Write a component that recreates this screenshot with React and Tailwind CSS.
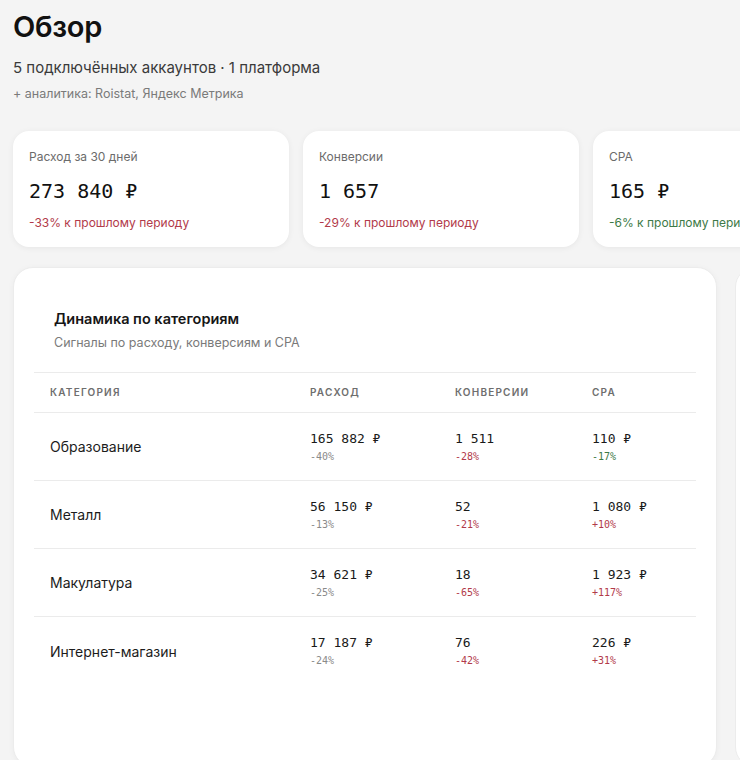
const cards = [
  { label: 'Расход за 30 дней', value: '273 840 ₽', delta: '-33% к прошлому периоду', tone: 'bad' },
  { label: 'Конверсии', value: '1 657', delta: '-29% к прошлому периоду', tone: 'bad' },
  { label: 'CPA', value: '165 ₽', delta: '-6% к прошлому периоду', tone: 'good' },
];

const rows = [
  { name: 'Образование', spend: '165 882 ₽', spendD: '-40%', conv: '1 511', convD: '-28%', cpa: '110 ₽', cpaD: '-17%', cpaTone: 'good' },
  { name: 'Металл', spend: '56 150 ₽', spendD: '-13%', conv: '52', convD: '-21%', cpa: '1 080 ₽', cpaD: '+10%', cpaTone: 'bad' },
  { name: 'Макулатура', spend: '34 621 ₽', spendD: '-25%', conv: '18', convD: '-65%', cpa: '1 923 ₽', cpaD: '+117%', cpaTone: 'bad' },
  { name: 'Интернет-магазин', spend: '17 187 ₽', spendD: '-24%', conv: '76', convD: '-42%', cpa: '226 ₽', cpaD: '+31%', cpaTone: 'bad' },
];

const toneClass = (tone) =>
  tone === 'good' ? 'text-[#3d7a47]' : tone === 'bad' ? 'text-[#b23a4a]' : 'text-[#8a8a8a]';

const StatCard = ({ label, value, delta, tone }) => (
  <div className="w-[276px] h-[116px] shrink-0 rounded-[16px] bg-white shadow-[0_1px_6px_rgba(0,0,0,0.06)] px-4 pt-[18px]">
    <div className="text-[12px] leading-4 text-[#6b6b6b]">{label}</div>
    <div className="mt-[14px] text-[20px] leading-6 text-[#111] font-['DejaVu_Sans_Mono',monospace]">{value}</div>
    <div className={`mt-[12px] text-[12px] leading-4 ${toneClass(tone)}`}>{delta}</div>
  </div>
);

const Cell = ({ value, delta, tone }) => (
  <div>
    <div className="text-[13px] leading-4 text-[#1a1a1a] font-['DejaVu_Sans_Mono',monospace]">{value}</div>
    <div className={`mt-[4px] text-[10px] leading-3 font-['DejaVu_Sans_Mono',monospace] ${toneClass(tone)}`}>{delta}</div>
  </div>
);

export default function App() {
  return (
    <div className="w-[740px] h-[760px] overflow-hidden bg-[#f4f4f4] font-['Inter','Noto_Sans',sans-serif] text-[#111]">
      <div className="pl-[13px] pt-[9px]">
        <h1 className="text-[29px] leading-9 font-semibold tracking-[-0.01em]">Обзор</h1>
        <p className="mt-[13px] text-[15px] leading-5 text-[#3a3a3a]">5 подключённых аккаунтов · 1 платформа</p>
        <p className="mt-[6px] text-[12.5px] leading-5 text-[#7a7a7a]">+ аналитика: Roistat, Яндекс Метрика</p>

        <div className="mt-[27px] flex gap-[14px]">
          {cards.map((c) => (
            <StatCard key={c.label} {...c} />
          ))}
        </div>

        <div className="mt-[20px] flex gap-[18px]">
          <div className="w-[704px] h-[500px] shrink-0 rounded-[20px] bg-white border border-[#ececec] shadow-[0_1px_6px_rgba(0,0,0,0.04)] px-5 pt-5">
            <div className="px-5 pt-[21px] pb-[19px]">
              <h2 className="text-[14.5px] leading-5 font-semibold text-[#161616]">Динамика по категориям</h2>
              <p className="mt-[4px] text-[12.5px] leading-5 text-[#7a7a7a]">Сигналы по расходу, конверсиям и CPA</p>
            </div>
            <div className="border-t border-[#ebebeb]">
              <div className="grid grid-cols-[260px_145px_137px_1fr] h-[40px] items-center pl-4 border-b border-[#ebebeb] text-[10px] font-semibold tracking-[0.12em] text-[#6e6e6e]">
                <div>КАТЕГОРИЯ</div>
                <div>РАСХОД</div>
                <div>КОНВЕРСИИ</div>
                <div>CPA</div>
              </div>
              {rows.map((r, i) => (
                <div
                  key={r.name}
                  className={`grid grid-cols-[260px_145px_137px_1fr] h-[68px] items-center pl-4 ${i < rows.length - 1 ? 'border-b border-[#ebebeb]' : ''}`}
                >
                  <div className="text-[14px] text-[#1c1c1c]">{r.name}</div>
                  <Cell value={r.spend} delta={r.spendD} tone="neutral" />
                  <Cell value={r.conv} delta={r.convD} tone="bad" />
                  <Cell value={r.cpa} delta={r.cpaD} tone={r.cpaTone} />
                </div>
              ))}
            </div>
          </div>
          <div className="w-[300px] h-[500px] shrink-0 rounded-[20px] bg-white border border-[#ececec]" />
        </div>
      </div>
    </div>
  );
}
